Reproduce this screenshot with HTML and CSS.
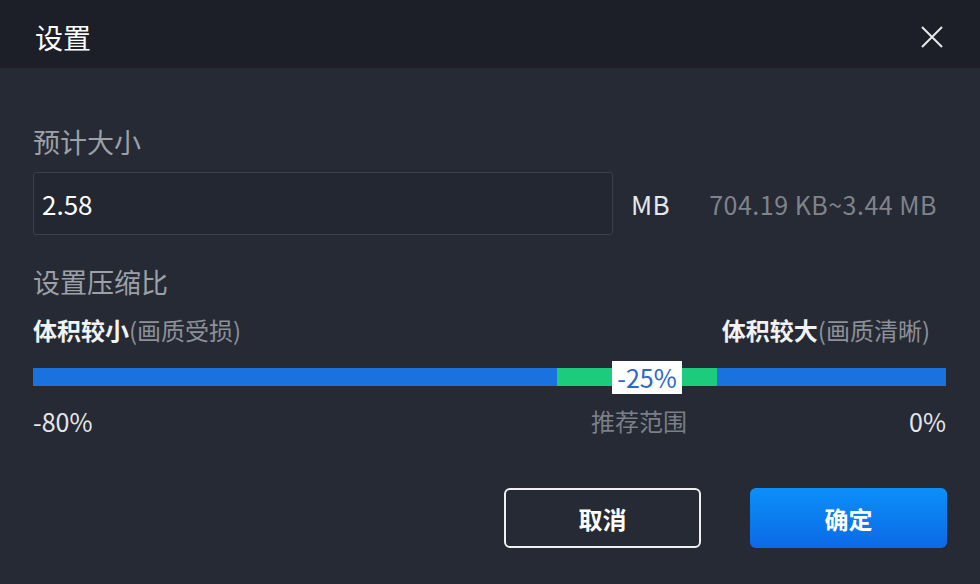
FILE: index.html
```html
<!DOCTYPE html>
<html lang="zh-CN">
<head>
    <meta charset="UTF-8">
    <title>设置</title>
    <link rel="stylesheet" href="styles.css">
</head>
<body>
    <div class="dialog">
        <div class="dialog-header">
            <h2>设置</h2>
            <svg class="close-icon" width="24" height="24" viewBox="0 0 24 24">
                <path d="M2 2 L22 22 M22 2 L2 22" stroke="#e8e9eb" stroke-width="2" fill="none"/>
            </svg>
        </div>

        <div class="dialog-body">
            <div class="field-label">预计大小</div>
            <div class="size-row">
                <div class="size-input">2.58</div>
                <span class="unit">MB</span>
                <span class="range-hint">704.19 KB~3.44 MB</span>
            </div>

            <div class="field-label section-gap">设置压缩比</div>
            <div class="slider-labels">
                <span><b>体积较小</b><em>(画质受损)</em></span>
                <span><b>体积较大</b><em>(画质清晰)</em></span>
            </div>

            <div class="slider">
                <div class="slider-track">
                    <div class="slider-recommend"></div>
                </div>
                <div class="slider-value">-25%</div>
            </div>

            <div class="slider-scale">
                <span class="scale-end">-80%</span>
                <span class="scale-mid">推荐范围</span>
                <span class="scale-end right">0%</span>
            </div>

            <div class="actions">
                <button class="btn btn-cancel">取消</button>
                <button class="btn btn-ok">确定</button>
            </div>
        </div>
    </div>
</body>
</html>
```

FILE: styles.css
```css
/* Page */
body, html {
    margin: 0;
    padding: 0;
    width: 980px;
    height: 584px;
    overflow: hidden;
    font-family: "Noto Sans CJK SC", "Noto Sans", sans-serif;
    background: #252a35;
}

.dialog {
    width: 980px;
    height: 584px;
    background: #252a35;
}

/* Header */
.dialog-header {
    box-sizing: border-box;
    height: 68px;
    padding: 6px 36px 0 35px;
    display: flex;
    justify-content: space-between;
    align-items: center;
    background: #1c1f27;
}

.dialog-header h2 {
    margin: 0;
    font-size: 28px;
    font-weight: normal;
    color: #fff;
    line-height: 1;
}

.close-icon {
    display: block;
}

/* Body */
.dialog-body {
    padding: 59px 33px 0 33px;
}

.field-label {
    font-size: 27px;
    line-height: 30px;
    color: #9da0a6;
}

.section-gap {
    margin-top: 32px;
}

/* Size row */
.size-row {
    display: flex;
    align-items: center;
    margin-top: 15px;
}

.size-input {
    box-sizing: border-box;
    width: 580px;
    height: 63px;
    padding: 0 8px;
    display: flex;
    align-items: center;
    border: 1px solid #3b404b;
    border-radius: 3px;
    background: #232731;
    color: #fff;
    font-size: 26px;
}

.unit {
    margin-left: 18px;
    font-size: 26px;
    letter-spacing: 0.5px;
    color: #e6e7e9;
}

.range-hint {
    margin-left: 39px;
    font-size: 25px;
    letter-spacing: 0.5px;
    color: #80838a;
}

/* Slider */
.slider-labels {
    display: flex;
    justify-content: space-between;
    margin-top: 18px;
    padding-right: 17px;
    font-size: 24px;
    line-height: 30px;
}

.slider-labels b {
    font-weight: bold;
    color: #f2f2f3;
}

.slider-labels em {
    font-style: normal;
    color: #8d9096;
}

.slider {
    position: relative;
    height: 33px;
    margin-top: 16px;
    width: 913px;
}

.slider-track {
    position: relative;
    top: 7px;
    height: 18px;
    background: #1a72de;
}

.slider-recommend {
    position: absolute;
    left: 524px;
    top: 0;
    width: 160px;
    height: 18px;
    background: #1dcb7c;
}

.slider-value {
    position: absolute;
    left: 579px;
    top: 0;
    width: 70px;
    height: 33px;
    background: #fff;
    color: #2d66c6;
    font-size: 25px;
    line-height: 33px;
    text-align: center;
}

.slider-scale {
    display: grid;
    grid-template-columns: 558px auto 1fr;
    align-items: center;
    margin-top: 12px;
    width: 913px;
    font-size: 25px;
    line-height: 30px;
}

.scale-end {
    color: #e6e7e9;
}

.scale-end.right {
    text-align: right;
}

.scale-mid {
    color: #7c7f86;
    font-size: 24px;
}

/* Buttons */
.actions {
    display: flex;
    justify-content: flex-end;
    gap: 49px;
    margin-top: 52px;
    width: 914px;
}

.btn {
    width: 197px;
    height: 60px;
    border-radius: 6px;
    font-family: "Noto Sans CJK SC", sans-serif;
    font-size: 24px;
    font-weight: bold;
    color: #fff;
    cursor: pointer;
}

.btn-cancel {
    background: #252a35;
    border: 2px solid #f0f0f0;
}

.btn-ok {
    border: none;
    background: linear-gradient(to bottom, #0c8ff9, #0b6ae6);
}
```
